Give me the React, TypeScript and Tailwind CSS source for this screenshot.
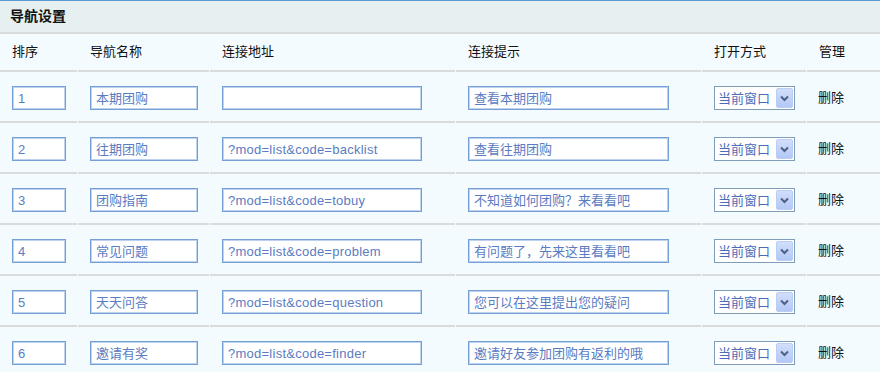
import React from "react";

const rows = [
  { id: "1", name: "本期团购", url: "", tip: "查看本期团购" },
  { id: "2", name: "往期团购", url: "?mod=list&code=backlist", tip: "查看往期团购" },
  { id: "3", name: "团购指南", url: "?mod=list&code=tobuy", tip: "不知道如何团购？来看看吧" },
  { id: "4", name: "常见问题", url: "?mod=list&code=problem", tip: "有问题了，先来这里看看吧" },
  { id: "5", name: "天天问答", url: "?mod=list&code=question", tip: "您可以在这里提出您的疑问" },
  { id: "6", name: "邀请有奖", url: "?mod=list&code=finder", tip: "邀请好友参加团购有返利的哦" },
];

const font = { fontFamily: '"Liberation Sans", "Noto Sans CJK SC", sans-serif' };

function Field({ value, w, extra = "" }: { value: string; w: string; extra?: string }) {
  return (
    <div
      className={`${w} h-[24px] bg-white border border-[#74a0d6] shadow-[inset_0_0_0_1px_#bcd2ee] flex items-center pl-[5px] text-[13px] text-[#5a7cc2] whitespace-nowrap overflow-hidden leading-none ${extra}`}
    >
      {value}
    </div>
  );
}

function Select() {
  return (
    <div className="w-[81px] h-[24px] bg-white border border-[#7f9db9] flex items-center text-[13px] text-[#4d6cb8] leading-none">
      <span className="pl-[3px] flex-1">当前窗口</span>
      <div className="w-[17px] h-[20px] mr-px rounded-[2px] bg-gradient-to-b from-[#d2defa] to-[#b3c8f6] border border-[#b9cdf5] flex items-center justify-center">
        <svg width="9" height="7" viewBox="0 0 9 7">
          <path d="M1 1.5 L4.5 5 L8 1.5" fill="none" stroke="#4d6185" strokeWidth="2" />
        </svg>
      </div>
    </div>
  );
}

const cols = "grid grid-cols-[77px_131px_245px_245px_104px_73px] gap-x-px";

export default function App() {
  return (
    <div className="w-[880px] h-[389px] bg-white" style={font}>
      <div className="h-px bg-[#5b9ad8]" />
      <div className="h-[31px] bg-[#e6f0f0] flex items-center pl-[10px] text-[14px] font-bold text-[#111]">
        导航设置
      </div>
      <div className="h-[2px] bg-[#d8dcdc]" />
      <div className="bg-[#f3fbff]">
        <div className={cols}>
          {["排序", "导航名称", "连接地址", "连接提示", "打开方式", "管理"].map((h) => (
            <div
              key={h}
              className="h-[38px] border-b-2 border-[#dadcdc] flex items-center pl-[12px] text-[13px] text-[#111]"
            >
              {h}
            </div>
          ))}
        </div>
        {rows.map((r, i) => {
          const last = i === rows.length - 1;
          const cell = last
            ? "h-[45px] pt-[14px] pl-[12px]"
            : "h-[51px] pt-[14px] pl-[12px] border-b-2 border-[#dadcdc]";
          return (
            <div key={r.id} className={cols}>
              <div className={cell}>
                <Field value={r.id} w="w-[54px]" />
              </div>
              <div className={cell}>
                <Field value={r.name} w="w-[108px]" />
              </div>
              <div className={cell}>
                <Field value={r.url} w="w-[200px]" extra="tracking-[0.25px]" />
              </div>
              <div className={cell}>
                <Field value={r.tip} w="w-[201px]" />
              </div>
              <div className={cell}>
                <Select />
              </div>
              <div className={`${cell} flex items-start`}>
                <span className="text-[13px] text-[#111] leading-[24px] -ml-px">删除</span>
              </div>
            </div>
          );
        })}
      </div>
    </div>
  );
}
